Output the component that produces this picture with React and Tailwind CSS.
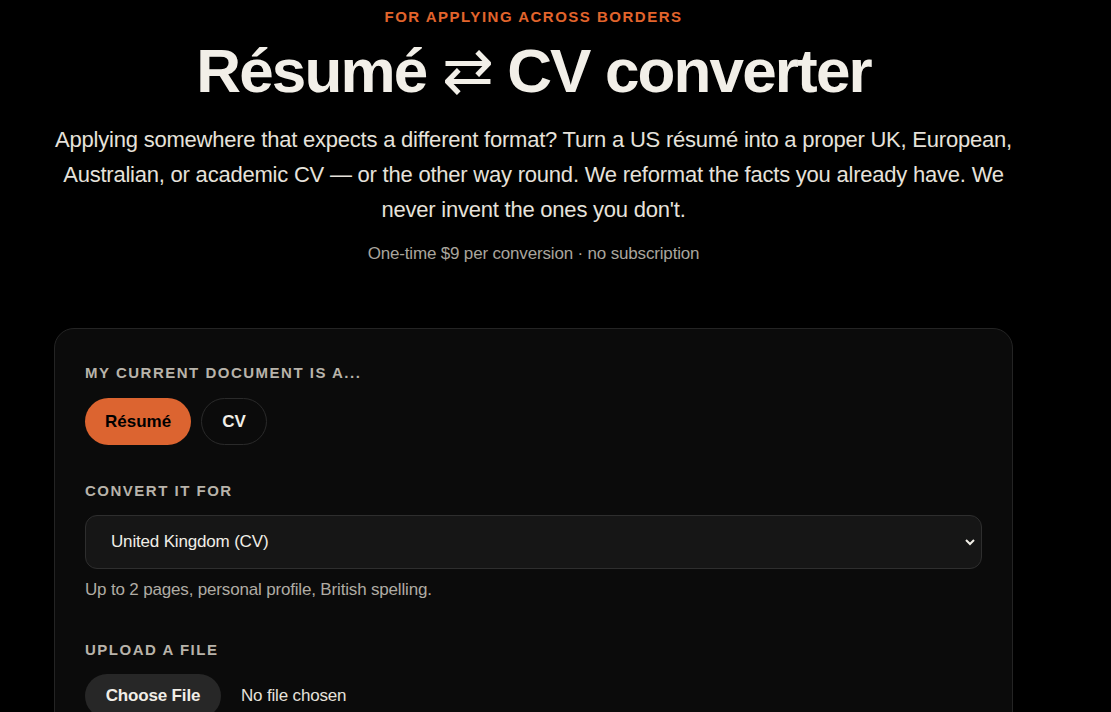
import { useState } from "react";

const labelCls =
  "text-[15px] leading-[18px] font-bold tracking-[0.1em] uppercase text-[#b8b3aa]";

const pillOn = "h-[47px] rounded-full bg-[#dc6430] text-black font-bold text-[17px]";
const pillOff = "h-[47px] rounded-full border border-[#2a2a2a] text-[#f1eee7] font-bold text-[17px]";

export default function App() {
  const [doc, setDoc] = useState("resume");
  const [target, setTarget] = useState("uk");

  return (
    <div className="min-h-screen bg-black text-[#f1eee7] [font-family:'Liberation_Sans',Arial,sans-serif]">
      <div className="w-[1067px] flex flex-col items-center">
        <p className="pt-[9px] text-[15px] font-bold tracking-[0.1em] text-[#e2642c] leading-[16px]">
          FOR APPLYING ACROSS BORDERS
        </p>
        <h1 className="mt-[12px] text-[62px] leading-[68px] font-bold tracking-[-0.03em] text-[#f2efe8]">
          Résumé <span className="font-normal">⇄</span> CV converter
        </h1>
        <p className="mt-[17px] text-center text-[22px] leading-[35px] tracking-[-0.01em] text-[#e6e2db]">
          Applying somewhere that expects a different format? Turn a US résumé into a proper UK, European,
          <br />
          Australian, or academic CV — or the other way round. We reformat the facts you already have. We
          <br />
          never invent the ones you don't.
        </p>
        <p className="mt-[17px] text-[17px] leading-[20px] tracking-[-0.01em] text-[#a9a59d]">
          One-time $9 per conversion · no subscription
        </p>

        <div className="mt-[64px] w-[959px] rounded-[20px] border border-[#242424] bg-[#0b0b0b] px-[30px] pt-[35px] pb-10">
          <p className={labelCls}>My current document is a...</p>
          <div className="mt-[16px] flex gap-[10px]">
            <button
              onClick={() => setDoc("resume")}
              className={(doc === "resume" ? pillOn : pillOff) + " px-[20px]"}
            >
              Résumé
            </button>
            <button
              onClick={() => setDoc("cv")}
              className={(doc === "cv" ? pillOn : pillOff) + " w-[66px]"}
            >
              CV
            </button>
          </div>

          <p className={labelCls + " mt-[37px]"}>Convert it for</p>
          <div className="relative mt-[15px]">
            <select
              value={target}
              onChange={(e) => setTarget(e.target.value)}
              className="w-full h-[54px] appearance-none rounded-[12px] border border-[#2e2e2e] bg-[#161616] pl-[25px] text-[17px] tracking-[-0.01em] text-[#f1eee7] outline-none"
            >
              <option value="uk">United Kingdom (CV)</option>
              <option value="eu">Europe (CV)</option>
              <option value="au">Australia (CV)</option>
              <option value="ac">Academic (CV)</option>
            </select>
            <svg
              className="pointer-events-none absolute right-[6px] top-[22px]"
              width="12"
              height="10"
              viewBox="0 0 12 10"
              fill="none"
            >
              <path d="M2 3l4 4 4-4" stroke="#f1eee7" strokeWidth="2" />
            </svg>
          </div>
          <p className="mt-[11px] text-[17px] leading-[20px] tracking-[-0.01em] text-[#b0aca4]">
            Up to 2 pages, personal profile, British spelling.
          </p>

          <p className={labelCls + " mt-[41px]"}>Upload a file</p>
          <div className="mt-[15px] flex items-center gap-[20px]">
            <span className="h-[44px] w-[136px] justify-center flex items-center rounded-full bg-[#272727] text-[17px] font-bold tracking-[-0.01em] text-[#f1eee7]">
              Choose File
            </span>
            <span className="text-[17px] tracking-[-0.01em] text-[#e6e2db]">No file chosen</span>
          </div>
        </div>
      </div>
    </div>
  );
}
